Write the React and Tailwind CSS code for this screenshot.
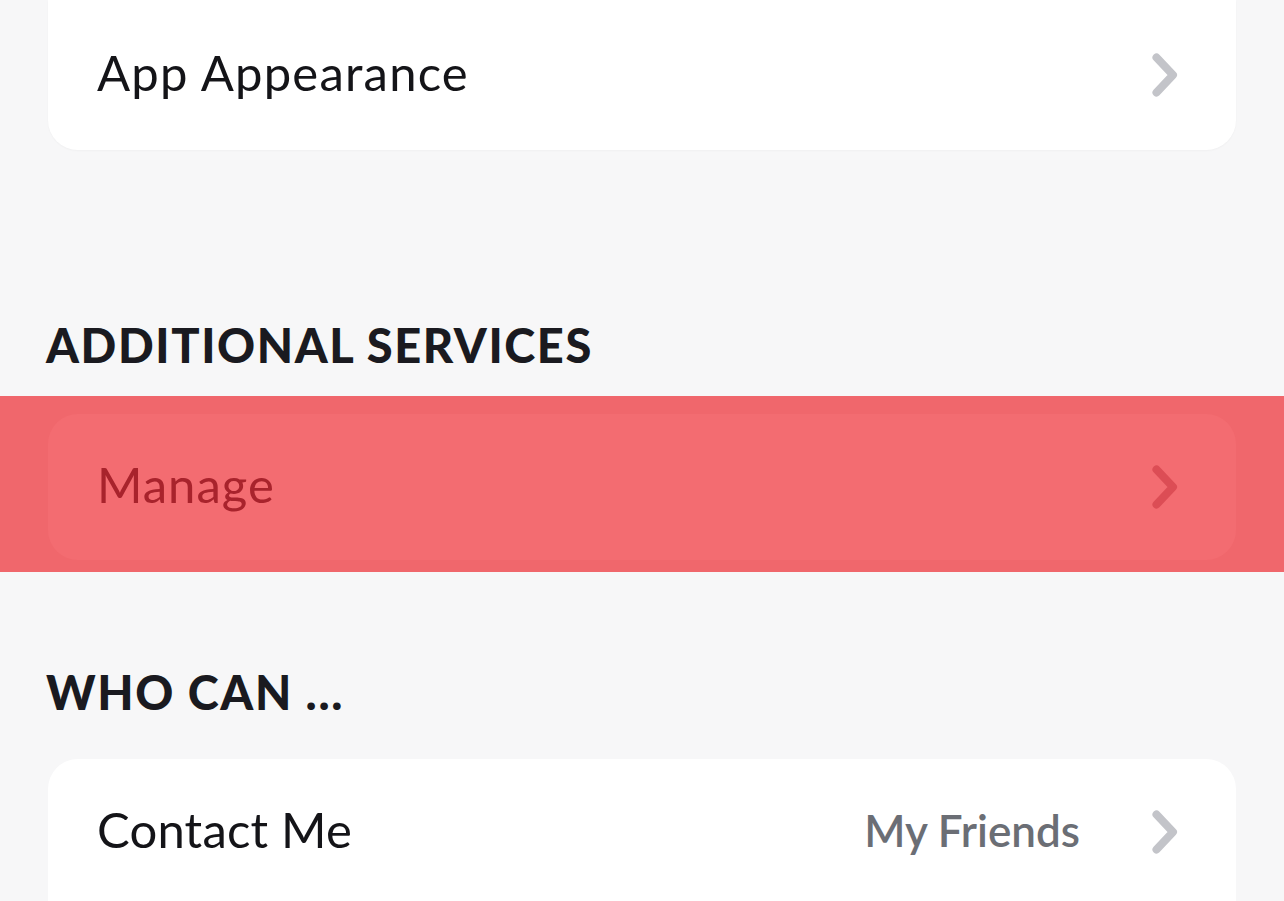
import React from 'react';

const font = { fontFamily: 'Lato, "Noto Sans", sans-serif' };

function Chevron({ color }) {
	return (
		<svg width="26" height="44" viewBox="0 0 26 44" fill="none">
			<polyline
				points="4.5,4.5 21,22 4.5,39.5"
				stroke={color}
				strokeWidth="8"
				strokeLinecap="round"
				strokeLinejoin="round"
			/>
		</svg>
	);
}

function Row({ label, value, labelClass = 'text-[#141418]', chevron = '#c3c4c9', track = 'tracking-[1px]' }) {
	return (
		<div className="h-[146px] flex items-center justify-between pl-[49px] pr-[58px]">
			<span className={`text-[49px] leading-none pb-[6px] ${track} ${labelClass}`}>{label}</span>
			<div className="flex items-center gap-[72px]">
				{value && (
					<span className="text-[44px] leading-none pb-[4px] font-semibold text-[#6b6e75]">
						{value}
					</span>
				)}
				<Chevron color={chevron} />
			</div>
		</div>
	);
}

function Header({ children }) {
	return (
		<div className="px-[46px] text-[47px] leading-none font-black tracking-[1.6px] text-[#1a1a20]">
			{children}
		</div>
	);
}

export default function App() {
	return (
		<div className="w-[1284px] h-[901px] overflow-hidden bg-[#f7f7f8]" style={font}>
			<div className="px-[48px]">
				<div className="bg-white rounded-b-[30px] h-[150px] flex items-center justify-between pl-[49px] pr-[58px] shadow-[0_1px_2px_rgba(0,0,0,0.03)]">
					<span className="text-[49px] leading-none pb-[6px] tracking-[1.2px] text-[#141418]">App Appearance</span>
					<Chevron color="#c3c4c9" />
				</div>
			</div>

			<div className="pt-[172px] pb-[27px]">
				<Header>ADDITIONAL SERVICES</Header>
			</div>

			<div className="bg-[#f0676c] pt-[18px] pb-[12px] px-[48px]">
				<div className="bg-[#f36c71] rounded-[30px]">
					<Row label="Manage" labelClass="text-[#a8232c]" chevron="#dc4d55" />
				</div>
			</div>

			<div className="pt-[97px] pb-[43px]">
				<Header>WHO CAN ...</Header>
			</div>

			<div className="px-[48px]">
				<div className="bg-white rounded-t-[30px]">
					<Row label="Contact Me" value="My Friends" track="tracking-[0.2px]" />
				</div>
			</div>
		</div>
	);
}
